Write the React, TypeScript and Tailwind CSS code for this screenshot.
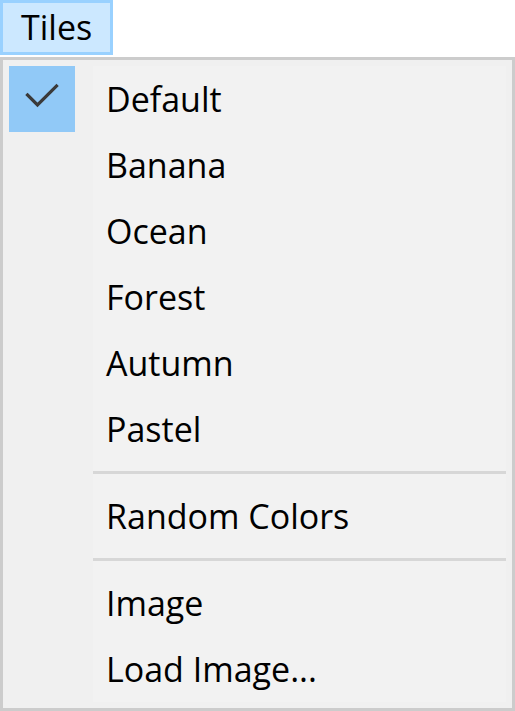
const ITEMS_A = ["Default", "Banana", "Ocean", "Forest", "Autumn", "Pastel"];

function CheckMark() {
  return (
    <svg width="66" height="66" viewBox="0 0 66 66">
      <polyline
        points="18.5,29 28.5,39 47.5,20"
        fill="none"
        stroke="#3a3a3a"
        strokeWidth="3.2"
        strokeLinecap="square"
      />
    </svg>
  );
}

function Item({ label, checked }: { label: string; checked?: boolean }) {
  return (
    <div className="flex h-[66px]">
      <div className="w-[84px] shrink-0 bg-[#f0f0f0]">
        {checked && (
          <div className="h-[66px] w-[66px] bg-[#91c9f7]">
            <CheckMark />
          </div>
        )}
      </div>
      <div className="flex-1 bg-[#f2f2f2] pl-[13px] leading-[66px]">{label}</div>
    </div>
  );
}

function Separator() {
  return (
    <div className="flex h-[21px]">
      <div className="w-[84px] shrink-0 bg-[#f0f0f0]" />
      <div className="flex flex-1 items-center bg-[#f2f2f2]">
        <div className="h-[3px] w-full bg-[#d7d7d7]" />
      </div>
    </div>
  );
}

export default function App() {
  return (
    <div
      className="h-[711px] w-[515px] bg-white text-[34px] font-medium text-black"
      style={{ fontFamily: '"Open Sans", "Noto Sans", sans-serif' }}
    >
      <div className="h-[57px]">
        <div className="h-[55px] w-[113px] border-[3px] border-[#99d1ff] bg-[#cce8ff] pl-[18px] pt-[1px] leading-[47px]">
          Tiles
        </div>
      </div>
      <div className="h-[654px] border-[3px] border-[#cccccc] bg-[#f0f0f0] p-[6px]">
        <div className="flex flex-col">
          {ITEMS_A.map((t, i) => (
            <Item key={t} label={t} checked={i === 0} />
          ))}
          <Separator />
          <Item label="Random Colors" />
          <Separator />
          <Item label="Image" />
          <Item label="Load Image..." />
        </div>
      </div>
    </div>
  );
}
